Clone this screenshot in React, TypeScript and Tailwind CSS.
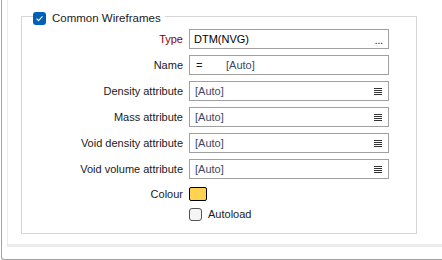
import React from "react";

const FIELDS = [
  { label: "Density attribute" },
  { label: "Mass attribute" },
  { label: "Void density attribute" },
  { label: "Void volume attribute" },
];

function ListIcon() {
  return (
    <svg width="8" height="8" viewBox="0 0 8 8" aria-hidden="true" className="shrink-0">
      <path d="M0 1.5h8M0 3.5h8M0 5.5h8M0 7.5h8" stroke="#333" strokeWidth="1" />
    </svg>
  );
}

function Label({ children, red }: { children: React.ReactNode; red?: boolean }) {
  return (
    <span className={`flex h-[20px] items-center justify-end ${red ? "text-[#8b0000]" : "text-[#1a1a1a]"}`}>
      {children}
    </span>
  );
}

export default function App() {
  return (
    <div
      className="h-[260px] w-[442px] overflow-hidden bg-white pl-[1px] text-[11px]"
      style={{ fontFamily: '"Liberation Sans", Arial, sans-serif' }}
    >
      {/* Outer panel */}
      <div className="h-[260px] rounded-bl-[3px] border-b border-l border-[#a3a3a3] pb-[6px] pl-[5px]">
        <div className="h-[247px] border-b-[3px] border-l border-[#ececec] pl-[13px] pt-[16px]">
          {/* Group box */}
          <div className="relative h-[218px] w-[396px] border border-[#d6d6d6] pl-0 pt-[12px]">
            {/* Header checkbox */}
            <div className="absolute -top-[7px] left-[11px] flex items-center gap-[6px] bg-white pr-[4px] text-[11.5px] text-[#1a1a1a]">
              <span className="flex h-[13px] w-[13px] items-center justify-center rounded-[3px] bg-[#005fb8]">
                <svg width="9" height="9" viewBox="0 0 9 9" aria-hidden="true">
                  <path d="M1.5 4.6l2 2 4-4.2" fill="none" stroke="white" strokeWidth="1.1" />
                </svg>
              </span>
              <span>Common Wireframes</span>
            </div>

            <div className="grid grid-cols-[161px_200px] gap-x-[6px] gap-y-[6px]">
              <Label red>Type</Label>
              <div className="flex h-[20px] items-center justify-between border border-[#a0a0a0] pl-[4px] pr-[5px] text-black">
                <span>DTM(NVG)</span>
                <span className="pt-[2px] text-[10px]">...</span>
              </div>

              <Label>Name</Label>
              <div className="flex h-[20px] items-center border border-[#a0a0a0] pl-[6px] text-[#1a1a1a]">
                <span className="w-[30px]">=</span>
                <span className="text-[#3c4a66]">[Auto]</span>
              </div>

              {FIELDS.map((f) => (
                <React.Fragment key={f.label}>
                  <Label>{f.label}</Label>
                  <div className="flex h-[20px] items-center justify-between border border-[#a0a0a0] pl-[5px] pr-[6px] text-[#3c4a66]">
                    <span>[Auto]</span>
                    <ListIcon />
                  </div>
                </React.Fragment>
              ))}

              <span className="mt-[1px] flex h-[16px] items-center justify-end text-[#1a1a1a]">Colour</span>
              <div className="mt-[1px] flex h-[16px] items-center">
                <span className="h-[14px] w-[18px] rounded-[2px] border border-black bg-[#ffd24f]" />
              </div>

              <span />
              <div className="-mt-[2px] flex h-[16px] items-center gap-[6px] text-[#1a1a1a]">
                <span className="h-[13px] w-[13px] rounded-[3px] border border-[#555] bg-[#f5f5f5]" />
                <span>Autoload</span>
              </div>
            </div>
          </div>
        </div>
      </div>
    </div>
  );
}
